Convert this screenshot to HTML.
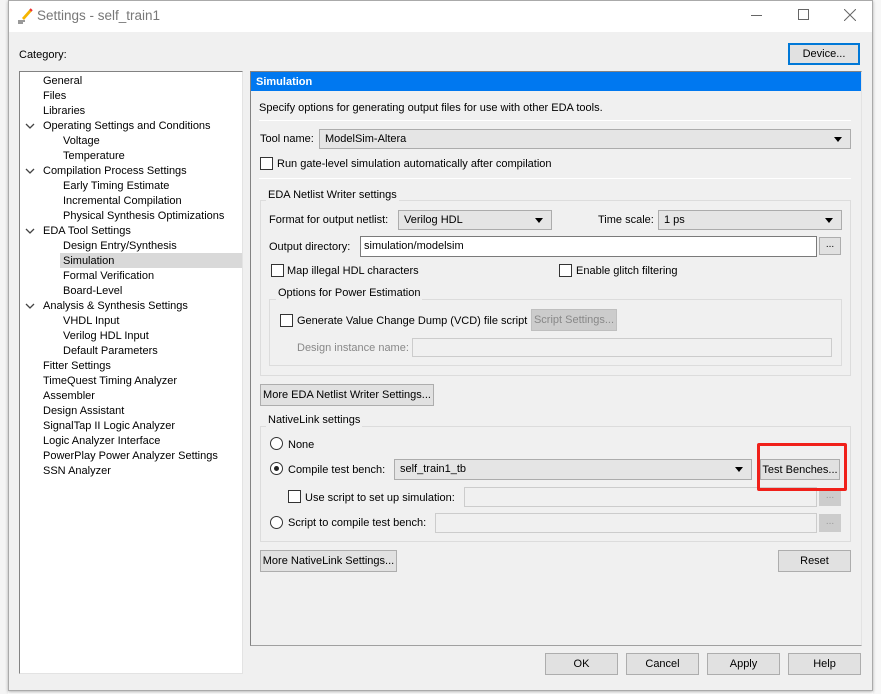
<!DOCTYPE html>
<html><head><meta charset="utf-8"><style>
*{box-sizing:border-box;margin:0;padding:0}
body{width:881px;height:694px;position:relative;overflow:hidden;background:#fff;font-family:"Liberation Sans",sans-serif;font-size:11px;color:#000}
.a{position:absolute;white-space:nowrap}
.t{position:absolute;white-space:nowrap;line-height:14px}
.btn{position:absolute;background:#e1e1e1;border:1px solid #adadad;text-align:center;line-height:20px;white-space:nowrap}
.cb{position:absolute;width:13px;height:13px;border:1px solid #333;background:#fff}
.combo{position:absolute;background:#e5e5e5;border:1px solid #acacac;line-height:19px;padding-left:5px}
.combo:after{content:"";position:absolute;right:8px;top:7px;border-left:4px solid transparent;border-right:4px solid transparent;border-top:5px solid #000}
.inp{position:absolute;background:#fff;border:1px solid #7a7a7a;line-height:19px;padding-left:3px}
.dis{position:absolute;background:#f0f0f0;border:1px solid #ccc}
.dots{position:absolute;background:#e1e1e1;border:1px solid #adadad;text-align:center;line-height:14px;font-size:10px}
.grp{position:absolute;border:1px solid #dcdcdc}
.gt{position:absolute;background:#f0f0f0;padding:0 2px;line-height:14px;white-space:nowrap}
.rad{position:absolute;width:13px;height:13px;border:1px solid #333;border-radius:50%;background:#fff}
.sep{position:absolute;height:1px;background:#a0a0a0;border-bottom:1px solid #fff}
</style></head><body>
<div class="a" style="left:0;top:0;width:8px;height:694px;background:#f4f4f4"></div>
<div class="a" style="left:873px;top:0;width:8px;height:694px;background:#f7f7f7"></div>
<div class="a" style="left:8px;top:0;width:865px;height:691px;background:#f0f0f0;border:1px solid #aaa;box-shadow:0 1px 3px rgba(0,0,0,.3)"></div>
<div class="a" style="left:9px;top:1px;width:863px;height:31px;background:#fff"></div>
<svg class="a" style="left:16px;top:6px" width="18" height="18" viewBox="0 0 18 18"><path d="M6 12 L14 3 L16 5 L8 14 Z" fill="#f5b500"/><path d="M14 3 L16 5" stroke="#e33" stroke-width="2"/><path d="M2 15 H9 M2 17 H7" stroke="#333"/></svg>
<div class="a" style="left:37px;top:8px;font-size:13.5px;color:#777">Settings - self_train1</div>
<div class="a" style="left:751px;top:15px;width:11px;height:1px;background:#666"></div>
<div class="a" style="left:798px;top:9px;width:11px;height:11px;border:1px solid #666"></div>
<svg class="a" style="left:844px;top:9px" width="12" height="12"><path d="M0 0L12 12M12 0L0 12" stroke="#666" stroke-width="1"/></svg>

<div class="t" style="left:19px;top:48px">Category:</div>
<div class="btn" style="left:788px;top:43px;width:72px;height:22px;border:2px solid #0078d7;line-height:19px">Device...</div>

<div class="a" style="left:19px;top:71px;width:224px;height:603px;background:#fff;border:1px solid #828282;border-right-color:#e3e3e3;border-bottom-color:#e3e3e3"></div>
<div class="a" style="left:60px;top:253px;width:182px;height:15px;background:#d9d9d9"></div>
<div class="t" style="left:43px;top:74px;line-height:15px">General<br>Files<br>Libraries<br>Operating Settings and Conditions<br><span style="padding-left:20px">Voltage</span><br><span style="padding-left:20px">Temperature</span><br>Compilation Process Settings<br><span style="padding-left:20px">Early Timing Estimate</span><br><span style="padding-left:20px">Incremental Compilation</span><br><span style="padding-left:20px">Physical Synthesis Optimizations</span><br>EDA Tool Settings<br><span style="padding-left:20px">Design Entry/Synthesis</span><br><span style="padding-left:20px">Simulation</span><br><span style="padding-left:20px">Formal Verification</span><br><span style="padding-left:20px">Board-Level</span><br>Analysis &amp; Synthesis Settings<br><span style="padding-left:20px">VHDL Input</span><br><span style="padding-left:20px">Verilog HDL Input</span><br><span style="padding-left:20px">Default Parameters</span><br>Fitter Settings<br>TimeQuest Timing Analyzer<br>Assembler<br>Design Assistant<br>SignalTap II Logic Analyzer<br>Logic Analyzer Interface<br>PowerPlay Power Analyzer Settings<br>SSN Analyzer</div>
<svg class="a" style="left:25px;top:122px" width="10" height="200"><g fill="none" stroke="#444" stroke-width="1.3"><path d="M1 2L5 6L9 2"/><path d="M1 47L5 51L9 47"/><path d="M1 107L5 111L9 107"/><path d="M1 182L5 186L9 182"/></g></svg>

<div class="a" style="left:250px;top:71px;width:612px;height:575px;border:1px solid #828282;border-right-color:#e3e3e3;border-bottom-color:#a0a0a0"></div>
<div class="a" style="left:251px;top:72px;width:610px;height:19px;background:#0078f0;color:#fff;font-weight:bold;line-height:20px;padding-left:5px">Simulation</div>
<div class="t" style="left:259px;top:101px">Specify options for generating output files for use with other EDA tools.</div>
<div class="sep" style="left:259px;top:120px;width:592px"></div>
<div class="t" style="left:260px;top:132px">Tool name:</div>
<div class="combo" style="left:319px;top:129px;width:532px;height:20px">ModelSim-Altera</div>
<div class="cb" style="left:260px;top:157px"></div>
<div class="t" style="left:277px;top:157px">Run gate-level simulation automatically after compilation</div>
<div class="sep" style="left:259px;top:178px;width:592px"></div>

<div class="grp" style="left:260px;top:200px;width:591px;height:176px"></div>
<div class="gt" style="left:266px;top:188px">EDA Netlist Writer settings</div>
<div class="t" style="left:269px;top:213px">Format for output netlist:</div>
<div class="combo" style="left:398px;top:210px;width:154px;height:20px">Verilog HDL</div>
<div class="t" style="left:598px;top:213px">Time scale:</div>
<div class="combo" style="left:658px;top:210px;width:184px;height:20px">1 ps</div>
<div class="t" style="left:269px;top:240px">Output directory:</div>
<div class="inp" style="left:360px;top:236px;width:457px;height:21px">simulation/modelsim</div>
<div class="dots" style="left:819px;top:237px;width:22px;height:18px">...</div>
<div class="cb" style="left:271px;top:264px"></div>
<div class="t" style="left:287px;top:264px">Map illegal HDL characters</div>
<div class="cb" style="left:559px;top:264px"></div>
<div class="t" style="left:576px;top:264px">Enable glitch filtering</div>
<div class="grp" style="left:269px;top:299px;width:573px;height:67px"></div>
<div class="gt" style="left:276px;top:286px">Options for Power Estimation</div>
<div class="cb" style="left:280px;top:314px"></div>
<div class="t" style="left:297px;top:314px">Generate Value Change Dump (VCD) file script</div>
<div class="btn" style="left:531px;top:309px;width:86px;height:22px;background:#ccc;border-color:#bfbfbf;color:#888">Script Settings...</div>
<div class="t" style="left:297px;top:341px;color:#888">Design instance name:</div>
<div class="dis" style="left:412px;top:338px;width:420px;height:19px"></div>

<div class="btn" style="left:260px;top:384px;width:174px;height:22px">More EDA Netlist Writer Settings...</div>

<div class="grp" style="left:260px;top:426px;width:591px;height:116px"></div>
<div class="gt" style="left:266px;top:413px">NativeLink settings</div>
<div class="rad" style="left:270px;top:437px"></div>
<div class="t" style="left:288px;top:438px">None</div>
<div class="rad" style="left:270px;top:462px"></div>
<div class="a" style="left:274px;top:466px;width:5px;height:5px;border-radius:50%;background:#222"></div>
<div class="t" style="left:288px;top:463px">Compile test bench:</div>
<div class="combo" style="left:394px;top:459px;width:358px;height:21px">self_train1_tb</div>
<div class="btn" style="left:760px;top:459px;width:80px;height:21px">Test Benches...</div>
<div class="cb" style="left:288px;top:490px"></div>
<div class="t" style="left:305px;top:491px">Use script to set up simulation:</div>
<div class="dis" style="left:464px;top:487px;width:353px;height:20px"></div>
<div class="dots" style="left:819px;top:488px;width:22px;height:18px;background:#ccc;border-color:#ccc;color:#999">...</div>
<div class="rad" style="left:270px;top:516px"></div>
<div class="t" style="left:288px;top:516px">Script to compile test bench:</div>
<div class="dis" style="left:435px;top:513px;width:382px;height:20px"></div>
<div class="dots" style="left:819px;top:514px;width:22px;height:18px;background:#ccc;border-color:#ccc;color:#999">...</div>

<div class="btn" style="left:260px;top:550px;width:137px;height:22px">More NativeLink Settings...</div>
<div class="btn" style="left:778px;top:550px;width:73px;height:22px">Reset</div>

<div class="btn" style="left:545px;top:653px;width:73px;height:22px">OK</div>
<div class="btn" style="left:626px;top:653px;width:73px;height:22px">Cancel</div>
<div class="btn" style="left:707px;top:653px;width:73px;height:22px">Apply</div>
<div class="btn" style="left:788px;top:653px;width:73px;height:22px">Help</div>

<div class="a" style="left:757px;top:443px;width:90px;height:48px;border:3px solid #f0201a;border-radius:2px"></div>
</body></html>
